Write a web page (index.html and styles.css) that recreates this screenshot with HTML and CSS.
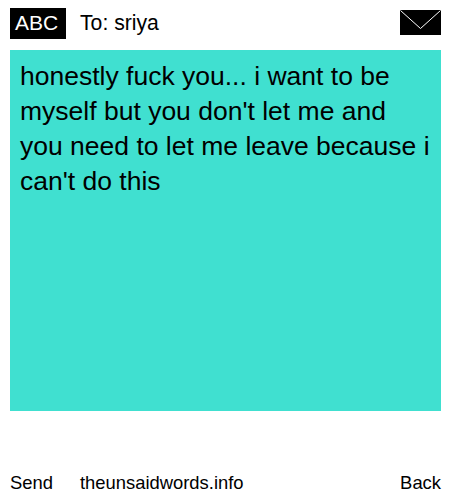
FILE: index.html
```
<!DOCTYPE html>
<html lang="en">
<head>
<meta charset="utf-8">
<title>The Unsaid Words</title>
<link rel="stylesheet" href="styles.css">
</head>
<body>
<div class="page">
  <header class="top">
    <div class="abc">ABC</div>
    <div class="to">To: sriya</div>
    <svg class="env" width="41" height="25" viewBox="0 0 41 25" aria-hidden="true">
      <rect width="41" height="25" fill="#000"/>
      <path d="M0.5 0.5 L20.5 18.5 L40.5 0.5" fill="none" stroke="#fff" stroke-width="1"/>
    </svg>
  </header>
  <main class="msg">honestly fuck you... i want to be myself but you don't let me and you need to let me leave because i can't do this</main>
  <footer class="bottom">
    <span class="send">Send</span>
    <span class="site">theunsaidwords.info</span>
    <span class="back">Back</span>
  </footer>
</div>
</body>
</html>
```
FILE: styles.css
```
html, body { margin: 0; padding: 0; background: #fff; }
body { font-family: "Liberation Sans", Arial, sans-serif; color: #000; }
.page { width: 450px; height: 500px; padding: 8px 9px 0 10px; box-sizing: border-box; display: flex; flex-direction: column; }
.top { display: flex; align-items: center; height: 31px; }
.abc { width: 56px; height: 31px; box-sizing: border-box; padding-left: 5px; background: #000; color: #fff; font-size: 21px; line-height: 30px; }
.to { align-self: flex-start; margin-left: 14px; font-size: 21.2px; line-height: 29px; flex: 1; }
.env { display: block; margin-top: -2px; }
.msg { margin-top: 11px; height: 361px; box-sizing: border-box; padding: 9px 10px; background: #40e0d0; font-size: 26.5px; line-height: 35px; }
.bottom { display: flex; margin-top: 60px; font-size: 18.4px; line-height: 24px; }
.site { margin-left: 27px; flex: 1; }
```
